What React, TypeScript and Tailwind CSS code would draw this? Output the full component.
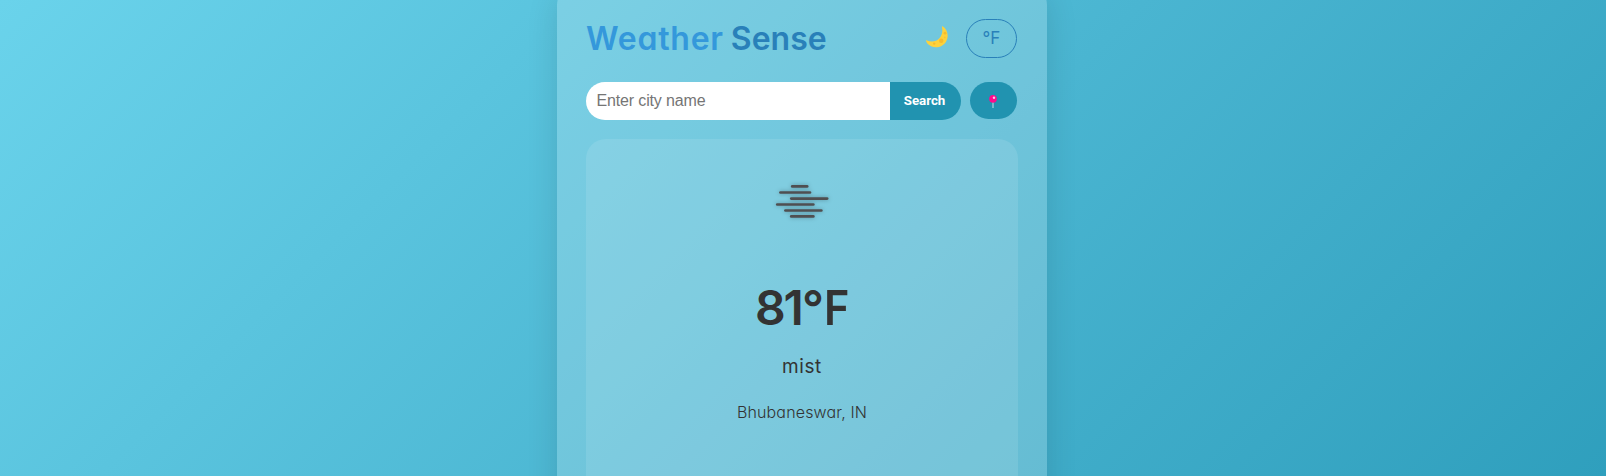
import React from 'react';

function MoonIcon() {
  return (
    <svg viewBox="0 0 22 22" className="h-[22px] w-[22px]">
      <path d="M16.6 0.3C21.2 3.4 23.2 9.6 20.4 14.9C17.4 20.7 10.6 22.6 5 20.2C2.4 19 0.7 17.2 0.1 15.1C-0.1 14.3 0.5 14.2 1.1 14.5C5.4 16.4 10.4 15.6 13.4 12.3C16.2 9.2 16.8 5.1 16 1.2C15.8 0.4 16.1 0 16.6 0.3Z" fill="#fdd23c" />
      <circle cx="15.2" cy="14.8" r="2.2" fill="#f7bb2d" />
      <circle cx="19" cy="7.2" r="1.4" fill="#f7bb2d" />
      <circle cx="8.2" cy="17.6" r="1.2" fill="#f7bb2d" />
      <circle cx="18.8" cy="11.4" r="0.9" fill="#f9c433" />
    </svg>
  );
}

function PinIcon() {
  return (
    <svg viewBox="0 0 8 14" className="mr-px mt-[2px] h-[14px] w-2">
      <rect x="3.5" y="6.5" width="1" height="6.5" fill="#c9dce6" />
      <circle cx="4" cy="3.9" r="3.8" fill="#ff0a8c" />
      <circle cx="5" cy="2.7" r="1.2" fill="#ffc4e4" />
    </svg>
  );
}

function MistIcon() {
  return (
    <svg viewBox="0 0 100 100" className="h-[100px] w-[100px] drop-shadow-[0_0_2px_rgba(0,0,0,0.3)]">
      <g stroke="#4f4f51" strokeWidth="2.6" strokeLinecap="round">
        <path d="M40.2 35.4H55.2" />
        <path d="M28.4 41.5H58" />
        <path d="M39.2 47.6H75.2" />
        <path d="M25.2 53.5H61.4" />
        <path d="M33.4 59.5H69.4" />
        <path d="M39.2 65.4H61.4" />
      </g>
    </svg>
  );
}

export default function App() {
  return (
    <div className="h-[476px] overflow-hidden bg-[linear-gradient(135deg,#6ad3eb_0%,#4ab5d1_55%,#2f9fbd_100%)] font-['Inter',sans-serif] [font-feature-settings:'cv11']">
      <main className="mx-auto -mt-[15px] h-[600px] w-[490px] translate-x-[-1px] rounded-[20px] bg-white/20 px-[29px] pt-[34px] shadow-[0_8px_32px_rgba(0,0,0,0.12)]">
        <header className="flex h-[39px] items-center justify-between pr-px">
          <h1 className="whitespace-nowrap text-[32px] leading-[39px] font-semibold text-[#3498db]">
            <span className="tracking-[0.75px]">Weather</span> <span className="-ml-px text-[#2980b9]">Sense</span>
          </h1>
          <div className="flex items-center gap-[18px]">
            <button aria-label="Toggle theme" className="pb-[4px]"><MoonIcon /></button>
            <button className="h-[39px] w-[51px] rounded-[20px] border border-[#2980b9] text-[17px] text-[#2980b9]">°F</button>
          </div>
        </header>
        <div className="mt-6 flex items-start">
          <input
            placeholder="Enter city name"
            className="h-[38px] w-[304px] rounded-l-[20px] bg-white pl-[10.5px] font-['Liberation_Sans',sans-serif] text-base tracking-[-0.15px] text-[#333] outline-none placeholder:text-[#757575]"
          />
          <button className="h-[38px] w-[71px] rounded-r-[20px] bg-[#2193b0] pr-[2px] font-['Roboto',sans-serif] text-[13.33px] font-bold tracking-[-0.05px] text-white">Search</button>
          <button aria-label="Use my location" className="ml-[9px] flex h-[37px] w-[47px] items-center justify-center rounded-[20px] bg-[#2193b0]"><PinIcon /></button>
        </div>
        <section className="mt-[19px] flex h-[440px] flex-col items-center rounded-[20px] bg-white/10 pt-3 text-[#333]">
          <MistIcon />
          <p className="mt-[29px] flex text-[48px] leading-[56px] font-semibold">
            <span className="tracking-[-2px]">81</span>
            <span>°</span>
            <span className="-mr-[3px] origin-left scale-x-90">F</span>
          </p>
          <p className="mt-[17px] text-[19px] leading-[28px] tracking-[0.6px]">mist</p>
          <p className="mt-[19px] text-base leading-6 font-[350] tracking-[0.15px]">Bhubaneswar, IN</p>
        </section>
      </main>
    </div>
  );
}
